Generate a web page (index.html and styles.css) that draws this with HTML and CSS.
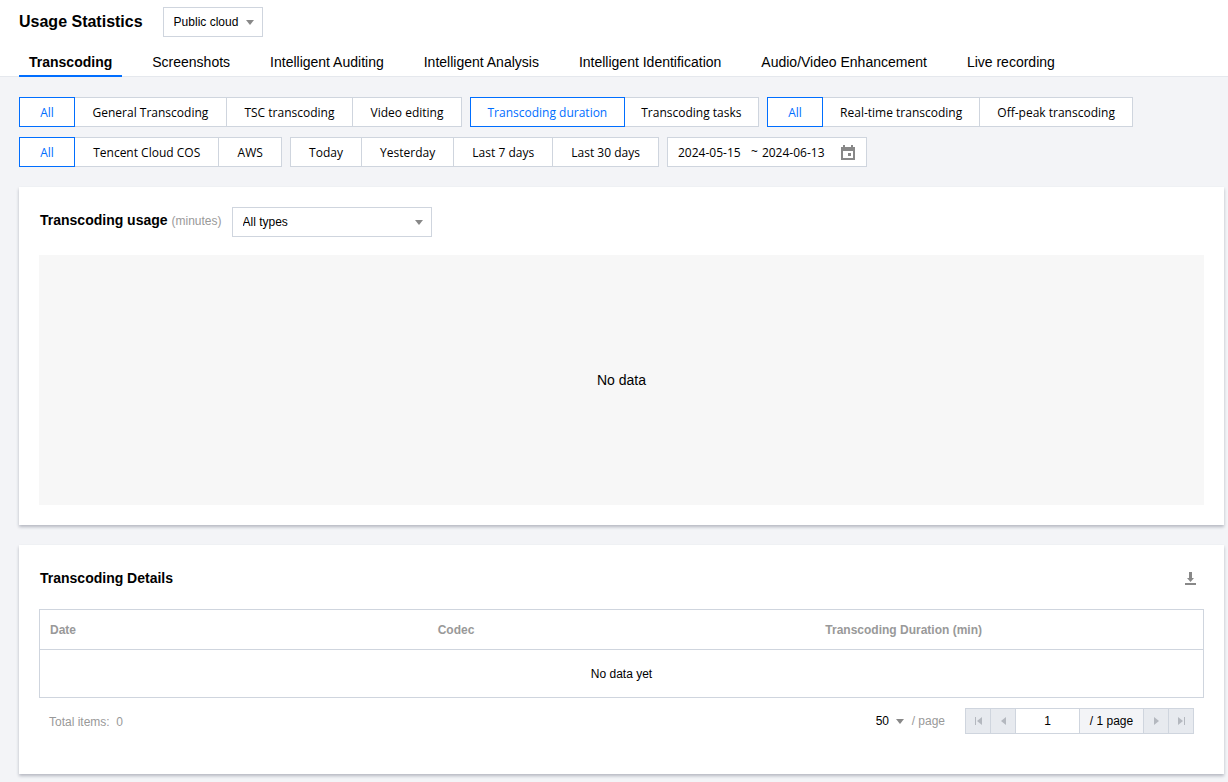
FILE: index.html
```
<!DOCTYPE html>
<html lang="en">
<head>
<meta charset="UTF-8">
<meta name="viewport" content="width=device-width, initial-scale=1.0">
<title>Usage Statistics</title>
<link rel="stylesheet" href="styles.css">
</head>

<body>
  <header>
    <div class="title-row">
      <h1>Usage Statistics</h1>
      <div class="select cloud">
        <select aria-label="Cloud">
          <option>Public cloud</option>
        </select>
        <svg class="caret" width="8" height="5" viewBox="0 0 8 5"><path d="M0 0h8L4 5z"/></svg>
      </div>
    </div>

    <nav class="tabs">
      <a href="#transcoding" class="active">Transcoding</a>
      <a href="#screenshots">Screenshots</a>
      <a href="#auditing">Intelligent Auditing</a>
      <a href="#analysis">Intelligent Analysis</a>
      <a href="#identification">Intelligent Identification</a>
      <a href="#enhancement">Audio/Video Enhancement</a>
      <a href="#recording">Live recording</a>
    </nav>
  </header>

  <main>
    <div class="filters">
      <div class="segment type">
        <button class="all active">All</button>
        <button>General Transcoding</button>
        <button>TSC transcoding</button>
        <button>Video editing</button>
      </div>
      <div class="segment metric">
        <button class="active">Transcoding duration</button>
        <button>Transcoding tasks</button>
      </div>
      <div class="segment mode">
        <button class="all active">All</button>
        <button>Real-time transcoding</button>
        <button>Off-peak transcoding</button>
      </div>
      <div class="segment storage">
        <button class="all active">All</button>
        <button>Tencent Cloud COS</button>
        <button>AWS</button>
      </div>
      <div class="segment period">
        <button>Today</button>
        <button>Yesterday</button>
        <button>Last 7 days</button>
        <button>Last 30 days</button>
      </div>
      <div class="date-range">
        <input type="text" value="2024-05-15" aria-label="Start date">
        <span>~</span>
        <input type="text" value="2024-06-13" aria-label="End date">
        <button aria-label="Open calendar">
          <svg width="14" height="15" viewBox="0 0 14 15"><path fill-rule="evenodd" d="M2 0h2v2h6V0h2v2h2v13H0V2h2zM2 6v7h10V6z"/><path d="M7 8h3v3H7z"/></svg>
        </button>
      </div>
    </div>

    <section class="card">
      <div class="usage-head">
        <h2>Transcoding usage <small>(minutes)</small></h2>
        <div class="select types">
          <select aria-label="Transcoding type">
            <option>All types</option>
          </select>
          <svg class="caret" width="8" height="5" viewBox="0 0 8 5"><path d="M0 0h8L4 5z"/></svg>
        </div>
      </div>
      <div class="chart">No data</div>
    </section>

    <section class="card">
      <div class="details-head">
        <h2>Transcoding Details</h2>
        <button class="download" aria-label="Download">
          <svg width="11" height="13" viewBox="0 0 11 13"><path d="M4 0h3v6h2L5.500 10 2 6h2zM0 11h11v2H0z"/></svg>
        </button>
      </div>

      <table>
        <thead>
          <tr><th>Date</th><th>Codec</th><th>Transcoding Duration (min)</th></tr>
        </thead>
        <tbody>
          <tr><td colspan="3">No data yet</td></tr>
        </tbody>
      </table>

      <div class="table-foot">
        <span class="total">Total items:&nbsp; 0</span>
        <div class="page-size">
          <div class="select">
            <select id="size">
              <option>50</option>
            </select>
            <svg class="caret" width="8" height="5" viewBox="0 0 8 5"><path d="M0 0h8L4 5z"/></svg>
          </div>
          <label for="size">/ page</label>
        </div>
        <div class="pager">
          <button disabled aria-label="First page"><svg width="7" height="8" viewBox="0 0 7 8"><path d="M0 0h1v8H0zM7 0v8L2 4z"/></svg></button>
          <button disabled aria-label="Previous page"><svg width="5" height="8" viewBox="0 0 5 8"><path d="M5 0v8L0 4z"/></svg></button>
          <input type="text" value="1" aria-label="Page number">
          <span>/ 1 page</span>
          <button disabled aria-label="Next page"><svg width="5" height="8" viewBox="0 0 5 8"><path d="M0 0v8l5-4z"/></svg></button>
          <button disabled aria-label="Last page"><svg width="7" height="8" viewBox="0 0 7 8"><path d="M6 0h1v8H6zM0 0v8l5-4z"/></svg></button>
        </div>
      </div>
    </section>
  </main>
</body>
</html>
```
FILE: styles.css
```
* {
  box-sizing: border-box;
}

body {
  margin: 0;
  background: #f3f4f7;
  color: #000;
  font-family: "Liberation Sans", Arial, sans-serif;
  font-size: 12px;
  line-height: 18px;
}

button,
input,
select {
  font: inherit;
  color: inherit;
  margin: 0;
}

button {
  padding: 0;
  cursor: pointer;
}

h1,
h2 {
  margin: 0;
}

svg {
  display: block;
  fill: #888;
}

header {
  background: #fff;
  border-bottom: 1px solid #e5e8ed;
  padding: 7px 19px 0;
}

.title-row {
  display: flex;
  align-items: center;
  gap: 20px;
}

h1 {
  font-size: 16px;
}

/* drop-downs */
.select {
  display: flex;
  align-items: center;
  position: relative;
}

.select select {
  appearance: none;
  width: 100%;
  height: 30px;
  padding: 0 20px 0 10px;
  border: 1px solid #cfd5de;
  border-radius: 0;
  background: #fff;
}

.caret {
  position: absolute;
  right: 9px;
  pointer-events: none;
}

.cloud {
  width: 100px;
}

.types {
  width: 200px;
}

/* tabs */
.tabs {
  display: flex;
  gap: 20px;
  margin-top: 10px;
}

.tabs a {
  padding: 6px 10px 4px;
  margin-bottom: -1px;
  border-bottom: 2px solid transparent;
  color: #000;
  font-size: 14px;
  text-decoration: none;
  white-space: nowrap;
}

.tabs .active {
  border-color: #006eff;
  font-weight: bold;
}

main {
  padding: 20px 4px 8px 19px;
}

/* filters */
.filters {
  display: flex;
  flex-wrap: wrap;
  gap: 10px 8px;
  font-family: "Open Sans", "Noto Sans", sans-serif;
}

.segment {
  display: flex;
}

.type {
  width: 443px;
}

.metric {
  width: 289px;
}

.mode {
  width: 366px;
}

.storage {
  width: 263px;
}

.period {
  width: 369px;
}

.segment button {
  flex: 1 0 auto;
  height: 30px;
  padding: 2px 14px 0;
  border: 1px solid #cfd5de;
  background: #fff;
  white-space: nowrap;
}

.segment button + button {
  margin-left: -1px;
}

.segment .all {
  flex: none;
  width: 56px;
}

.segment .active {
  position: relative;
  border-color: #006eff;
  color: #006eff;
}

.date-range {
  display: flex;
  align-items: center;
  width: 200px;
  height: 30px;
  padding: 0 11px 0 10px;
  border: 1px solid #cfd5de;
  background: #fff;
}

.date-range input {
  width: 66px;
  padding: 2px 0 0;
  border: 0;
}

.date-range span {
  margin: 0 4px 0 7px;
}

.date-range button {
  margin-left: auto;
  border: 0;
  background: none;
}

/* panels */
.card {
  margin-top: 20px;
  padding: 20px;
  background: #fff;
  box-shadow: 0 2px 3px 0 rgba(54, 58, 80, 0.32);
}

h2 {
  font-size: 14px;
}

h2 small {
  color: #999;
  font-size: 12px;
  font-weight: normal;
}

.usage-head {
  display: flex;
  gap: 10px;
}

.usage-head h2 {
  padding: 4px 0 0 1px;
}

.chart {
  display: flex;
  align-items: center;
  justify-content: center;
  height: 250px;
  margin-top: 18px;
  background: #f7f7f7;
  font-size: 14px;
}

.details-head {
  display: flex;
  align-items: center;
  justify-content: space-between;
  padding: 4px 8px 4px 1px;
}

.download {
  border: 0;
  background: none;
}

table {
  width: 100%;
  margin-top: 18px;
  table-layout: fixed;
  border: 1px solid #cfd5de;
  border-spacing: 0;
}

th {
  height: 40px;
  padding: 0 10px;
  border-bottom: 1px solid #cfd5de;
  color: #999;
  text-align: left;
}

td {
  height: 47px;
  padding: 0;
  text-align: center;
}

.table-foot {
  display: flex;
  align-items: center;
  padding: 10px 10px 20px;
  color: #999;
}

.total {
  margin-right: auto;
  padding-top: 2px;
}

.page-size {
  display: flex;
  align-items: center;
  gap: 8px;
  margin-right: 20px;
}

.page-size .select {
  width: 28px;
}

.page-size select {
  height: 26px;
  padding: 0;
  border: 0;
  color: #000;
}

.page-size .caret {
  right: 0;
}

.pager {
  display: flex;
  height: 26px;
  border: 1px solid #cfd5de;
  border-left: 0;
  color: #000;
}

.pager > * {
  border: 0;
  border-left: 1px solid #cfd5de;
  border-radius: 0;
}

.pager button {
  display: flex;
  align-items: center;
  justify-content: center;
  width: 25px;
  background: #e7eaef;
}

.pager button svg {
  fill: #b4b8bf;
}

.pager input {
  width: 64px;
  padding: 0;
  text-align: center;
}

.pager span {
  width: 64px;
  padding: 3px 0;
  background: #f3f4f7;
  text-align: center;
}
```
